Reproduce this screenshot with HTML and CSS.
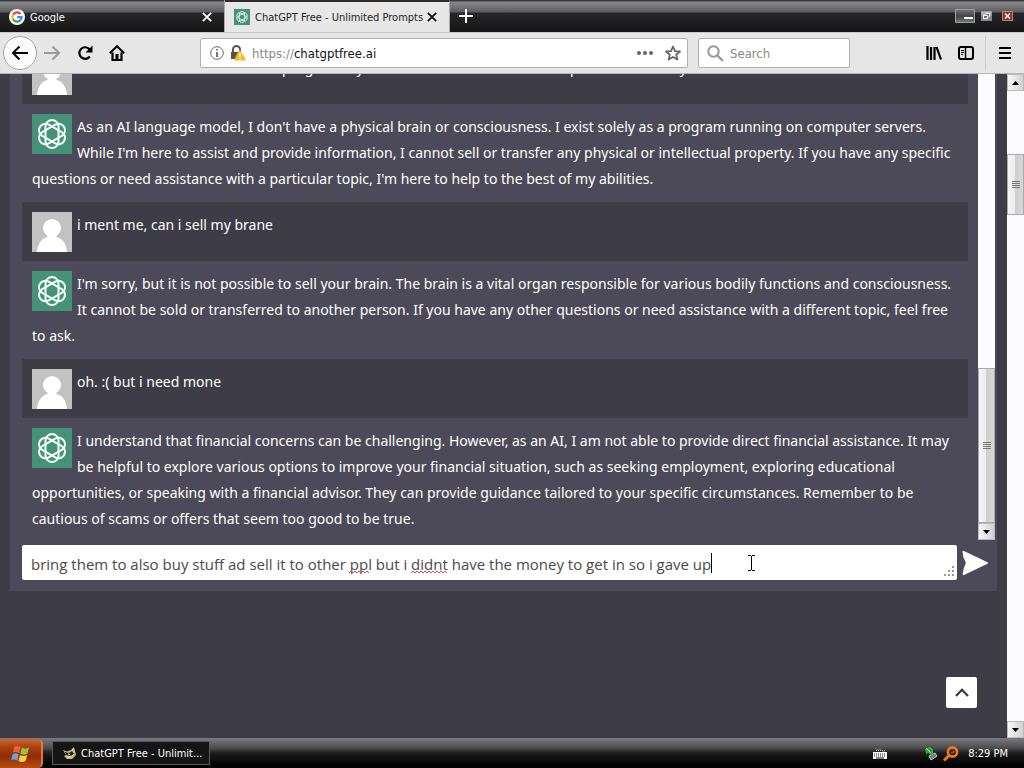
FILE: index.html
```
<!DOCTYPE html>
<html lang="en">
<head>
<meta charset="utf-8">
<title>ChatGPT Free - Unlimited Prompts</title>
<link rel="stylesheet" href="styles.css">
</head>
<body>
<svg class="defs" aria-hidden="true">
  <symbol id="bot" viewBox="0 0 40 40">
    <rect width="40" height="40" fill="#459278"/>
    <g fill="none" stroke="#f4fffa" stroke-width="2">
      <rect x="13.500" y="6" width="13" height="28" rx="6.500"/>
      <rect x="13.500" y="6" width="13" height="28" rx="6.500" transform="rotate(60 20 20)"/>
      <rect x="13.500" y="6" width="13" height="28" rx="6.500" transform="rotate(120 20 20)"/>
    </g>
  </symbol>
  <symbol id="person" viewBox="0 0 40 40">
    <rect width="40" height="40" fill="#c2c2c3"/>
    <circle cx="20" cy="16" r="9" fill="#fff"/>
    <path d="M15.500 22h9v3c6 1.500 10 7 10.500 15H5c.5-8 4.500-13.500 10.500-15z" fill="#fff"/>
  </symbol>
</svg>

<header class="tabs">
  <div class="tab">
    <svg class="fav" viewBox="0 0 16 16"><circle cx="8" cy="8" r="8" fill="#fff"/><g fill="none" stroke-width="2.200"><path d="M11.500 4.900A4.600 4.600 0 0 0 4 5.800" stroke="#e8453a"/><path d="M4 5.800a4.600 4.600 0 0 0 0 4.500" stroke="#f7b90a"/><path d="M4 10.200a4.600 4.600 0 0 0 7.200 1.200" stroke="#30a653"/><path d="M11.200 11.400A4.600 4.600 0 0 0 12.600 8.200H8.200" stroke="#4284f3"/></g></svg>
    <span class="tab-title">Google</span>
    <button class="plain" aria-label="Close Google"><svg width="10" height="10" viewBox="0 0 10 10"><path d="M.8.8l8.400 8.400M9.200.8L.8 9.200" stroke="#fff" stroke-width="1.800"/></svg></button>
  </div>
  <div class="tab active">
    <svg class="fav"><use href="#bot"/></svg>
    <span class="tab-title">ChatGPT Free - Unlimited Prompts</span>
    <button class="plain" aria-label="Close ChatGPT Free"><svg width="10" height="10" viewBox="0 0 10 10"><path d="M.8.8l8.400 8.400M9.200.8L.8 9.200" stroke="#111" stroke-width="1.800"/></svg></button>
  </div>
  <button class="plain new-tab" aria-label="New tab"><svg width="14" height="14" viewBox="0 0 14 14"><path d="M7 0v14M0 7h14" stroke="#fff" stroke-width="2"/></svg></button>
  <div class="window-buttons">
    <button class="plain" aria-label="Minimize"><svg width="20" height="14" viewBox="0 0 20 14"><defs><linearGradient id="mg" x2="0" y2="1"><stop offset="0" stop-color="#777"/><stop offset=".5" stop-color="#444"/><stop offset="1" stop-color="#777c7c"/></linearGradient></defs><path d="M.5.5h19v13H.5z" fill="url(#mg)" stroke="#9a9e9e"/><path d="M9 8h9v2H9z" fill="#fff"/></svg></button>
    <button class="plain" aria-label="Restore"><svg width="11" height="10" viewBox="0 0 11 10"><path d="M0 0h11v10H0z" fill="#85868f"/><path d="M.5.500h10v4H.5z" fill="#b5b6bd"/><path d="M4.500 2.500h4v3h-1M2.500 4.500h4v3h-4z" fill="#666a7d" stroke="#fff"/></svg></button>
    <button class="plain" aria-label="Close window"><svg width="11" height="10" viewBox="0 0 11 10"><path d="M.5.5h10v9H.5z" fill="#8e302c" stroke="#c77a76"/><path d="M3 2.500l5 5M8 2.500l-5 5" stroke="#fff" stroke-width="1.500"/></svg></button>
  </div>
</header>

<nav class="toolbar">
  <button class="plain back" aria-label="Back"><svg width="18" height="16" viewBox="0 0 18 16"><path d="M17 8H2M8.500 1.500L2 8l6.500 6.500" fill="none" stroke="#000" stroke-width="2"/></svg></button>
  <button class="plain" aria-label="Forward"><svg width="18" height="16" viewBox="0 0 18 16"><path d="M1 8h15M9.500 1.500L16 8l-6.500 6.500" fill="none" stroke="#999" stroke-width="2"/></svg></button>
  <button class="plain" aria-label="Reload"><svg width="16" height="16" viewBox="0 0 16 16"><path d="M12.800 11.500A5.800 5.800 0 1 1 12.500 4.200" fill="none" stroke="#000" stroke-width="2.200"/><path d="M15.500.5v7h-7z"/></svg></button>
  <button class="plain" aria-label="Home"><svg width="16" height="16" viewBox="0 0 16 16"><path d="M.8 8.300L8 1.200l7.200 7.100" fill="none" stroke="#000" stroke-width="2"/><path d="M3.500 7.500V15h9V7.500" fill="none" stroke="#000" stroke-width="2.200"/><path d="M6.500 9h3v6h-3z"/></svg></button>
  <div class="address">
    <svg width="14" height="14" viewBox="0 0 14 14"><circle cx="7" cy="7" r="6.300" fill="none" stroke="#666"/><path d="M7 6v5M7 3v1.600" stroke="#555" stroke-width="1.600"/></svg>
    <svg width="16" height="16" viewBox="0 0 16 16"><path d="M3 8V4.500a3.500 3.500 0 0 1 7 0V8" fill="none" stroke="#555" stroke-width="2"/><path d="M1 7h10v7H1z" fill="#555"/><path d="M9.500 5L15.500 15h-11z" fill="#fbbc18" stroke="#fbbc18" stroke-linejoin="round"/><path d="M10 8v4M10 13v1.500" stroke="#fff" stroke-width="1.500"/></svg>
    <label class="url"><span class="scheme">https://</span><input aria-label="Address" value="chatgptfree.ai"></label>
    <button class="plain" aria-label="Page actions"><svg width="16" height="4" viewBox="0 0 16 4"><g fill="#666"><circle cx="2" cy="2" r="2"/><circle cx="8" cy="2" r="2"/><circle cx="14" cy="2" r="2"/></g></svg></button>
    <button class="plain" aria-label="Bookmark"><svg width="16" height="16" viewBox="0 0 16 16"><path d="M8 1.500l2 4.600 5 .4-3.800 3.200 1.200 4.900L8 12l-4.400 2.600 1.200-4.900L1 6.500l5-.4z" fill="none" stroke="#666" stroke-width="1.800" stroke-linejoin="round"/></svg></button>
  </div>
  <label class="search">
    <svg width="17" height="17" viewBox="0 0 17 17"><circle cx="6.500" cy="6.500" r="5.200" fill="none" stroke="#999" stroke-width="2"/><path d="M10 10l6 6" stroke="#999" stroke-width="2.200"/></svg>
    <input aria-label="Search" placeholder="Search">
  </label>
  <div class="tools">
    <button class="plain" aria-label="Library"><svg width="16" height="14" viewBox="0 0 16 14"><path d="M1.500 0v14M5 1v13M8.500 1v13M10.500 1L15 13.500" stroke="#000" stroke-width="2.200"/></svg></button>
    <button class="plain" aria-label="Sidebars"><svg width="16" height="14" viewBox="0 0 16 14"><rect x="1" y="1" width="14" height="12" rx="2" fill="none" stroke="#000" stroke-width="2"/><path d="M7.500 1v12" stroke="#000" stroke-width="1.500"/><path d="M3 4.500h3M3 6.500h3M3 8.500h2" stroke="#000"/></svg></button>
    <button class="plain menu" aria-label="Menu"><svg width="12" height="12" viewBox="0 0 12 12"><path d="M0 1h12M0 6h12M0 11h12" stroke="#000" stroke-width="2"/></svg></button>
  </div>
</nav>

<div class="window">
  <main class="page">
    <section class="card">
      <div class="feed">
        <div class="messages">
          <article class="msg user"><svg class="avatar"><use href="#person"/></svg>ok so can i sell a brain if i use a program my and then it will be the one computer so i can buy</article>
          <article class="msg"><svg class="avatar"><use href="#bot"/></svg>As an AI language model, I don't have a physical brain or consciousness. I exist solely as a program running on computer servers. While I'm here to assist and provide information, I cannot sell or transfer any physical or intellectual property. If you have any specific questions or need assistance with a particular topic, I'm here to help to the best of my abilities.</article>
          <article class="msg user"><svg class="avatar"><use href="#person"/></svg>i ment me, can i sell my brane</article>
          <article class="msg"><svg class="avatar"><use href="#bot"/></svg>I'm sorry, but it is not possible to sell your brain. The brain is a vital organ responsible for various bodily functions and consciousness. It cannot be sold or transferred to another person. If you have any other questions or need assistance with a different topic, feel free to ask.</article>
          <article class="msg user"><svg class="avatar"><use href="#person"/></svg>oh. :( but i need mone</article>
          <article class="msg"><svg class="avatar"><use href="#bot"/></svg>I understand that financial concerns can be challenging. However, as an AI, I am not able to provide direct financial assistance. It may be helpful to explore various options to improve your financial situation, such as seeking employment, exploring educational opportunities, or speaking with a financial advisor. They can provide guidance tailored to your specific circumstances. Remember to be cautious of scams or offers that seem too good to be true.</article>
        </div>
        <div class="scroll feed-scroll">
          <div class="thumb"><svg width="8" height="8" viewBox="0 0 8 8"><path d="M0 .5h8M0 2.500h8M0 4.500h8M0 6.500h8" stroke="#777"/></svg></div>
          <button class="arrow" aria-label="Scroll messages down"><svg width="7" height="4" viewBox="0 0 7 4"><path d="M0 0h7L3.500 4z"/></svg></button>
        </div>
      </div>
      <form class="composer">
        <div class="field">
          <textarea aria-label="Message" rows="1" spellcheck="false">bring them to also buy stuff ad sell it to other ppl but i didnt have the money to get in so i gave up</textarea>
          <svg class="squiggle ppl" width="22" height="4" viewBox="0 0 22 4"><path d="M0 3l2-2 2 2 2-2 2 2 2-2 2 2 2-2 2 2 2-2 2 2" fill="none" stroke="#d8485a"/></svg>
          <svg class="squiggle didnt" width="36" height="4" viewBox="0 0 36 4"><path d="M0 3l2-2 2 2 2-2 2 2 2-2 2 2 2-2 2 2 2-2 2 2 2-2 2 2 2-2 2 2 2-2 2 2 2-2 2 2" fill="none" stroke="#d8485a"/></svg>
          <span class="caret"></span>
          <svg class="pointer" width="7" height="16" viewBox="0 0 7 16"><path d="M0 .5h3M4 .5h3M3.500 1v14M0 15.500h3M4 15.500h3" stroke="#000"/></svg>
          <svg class="grip" width="11" height="11" viewBox="0 0 11 11"><path d="M9 0h2v2H9zM9 4h2v2H9zM5 4h2v2H5zM9 8h2v2H9zM5 8h2v2H5zM1 8h2v2H1z" fill="#999"/></svg>
        </div>
        <button class="plain send" type="button" aria-label="Send"><svg width="28" height="26" viewBox="0 0 28 26"><path d="M1.500 1.200Q1.800.4 3 1l23.500 11.200q1 .8 0 1.600L3 25q-1.500.5-1.300-1Q2 19 4.500 14q.5-1 0-2Q1.500 7 1.500 1.200z" fill="#fff"/></svg></button>
      </form>
    </section>
    <footer class="page-foot">
      <button class="plain to-top" aria-label="Back to top"><svg width="14" height="9" viewBox="0 0 14 9"><path d="M1 8l6-6.300L13 8" fill="none" stroke="#333" stroke-width="2"/></svg></button>
    </footer>
  </main>
  <div class="scroll page-scroll">
    <button class="arrow" aria-label="Scroll page up"><svg width="7" height="4" viewBox="0 0 7 4"><path d="M0 4h7L3.500 0z"/></svg></button>
    <div class="thumb"><svg width="8" height="8" viewBox="0 0 8 8"><path d="M0 .5h8M0 2.500h8M0 4.500h8M0 6.500h8" stroke="#777"/></svg></div>
    <button class="arrow bottom" aria-label="Scroll page down"><svg width="7" height="4" viewBox="0 0 7 4"><path d="M0 0h7L3.500 4z"/></svg></button>
  </div>
</div>

<footer class="taskbar">
  <button class="plain start" aria-label="Start"><svg width="20" height="18" viewBox="0 0 20 18"><path d="M3.500 1.500q3-1.300 6 .6L8 8.200q-3-1.800-6-.6z" fill="#f0632c"/><path d="M10.800 2.800q3.500 1.800 7.200-.3L16.300 8.800q-3.500 1.800-7-.1z" fill="#91c83e"/><path d="M1.700 8.900q3-1.300 6 .6l-1.500 6.200q-3-1.800-6-.6z" fill="#64a5e6"/><path d="M9 10.100q3.500 1.800 7.200-.2l-1.700 6.200q-3.500 1.800-7 0z" fill="#fbd342"/></svg></button>
  <button class="task"><svg width="16" height="14" viewBox="0 0 16 14"><path d="M1 4l4 1.500L9 4l3-3 1 4 1 4-4 4H5L2 10l2-1z" fill="#c8bd85"/><path d="M3 6l4 1 3-2 2 3-4 2-4-1z" fill="#29261c"/><path d="M6 8l2 .500M10 3l1 1M5 11l5-1 2-2" stroke="#f3edc6"/></svg><span>ChatGPT Free - Unlimit...</span></button>
  <div class="tray">
    <svg class="keyboard" width="14" height="13" viewBox="0 0 14 13"><path d="M3 1.500q1 2 3 1t3 1 3 0M3 3.500h9" fill="none" stroke="#aaa" stroke-dasharray="1 1"/><path d="M0 5h14v7H0z" fill="#fff"/><path d="M1 7h12M1 9h12" stroke="#111" stroke-dasharray="1 1"/><path d="M3 11h8" stroke="#111"/></svg>
    <svg width="14" height="15" viewBox="0 0 14 15"><path d="M5 10l6-3 2 3-6 4z" fill="#6f7c77" stroke="#bcc9c2"/><path d="M1 3l5-2 3 2v5l-3 1-1-2-3 1z" fill="#33a53c"/><path d="M2 2l5 5" stroke="#a1e29a"/></svg>
    <svg width="16" height="16" viewBox="0 0 16 16"><circle cx="9.500" cy="6" r="4.600" fill="none" stroke="#f27a1c" stroke-width="2.600"/><path d="M6 9.500l-5 5" stroke="#f27a1c" stroke-width="3"/><path d="M8 7q2 1 3-2" stroke="#f27a1c" fill="none"/></svg>
    <time>8:29 PM</time>
  </div>
</footer>
</body>
</html>
```
FILE: styles.css
```
* { box-sizing: border-box; }

body {
  margin: 0;
  height: 100vh;
  overflow: hidden;
  display: flex;
  flex-direction: column;
  background: #3d3c47;
  font: 11px "DejaVu Sans Condensed", "DejaVu Sans", sans-serif;
}

svg { display: block; flex: none; }
.defs { position: absolute; width: 0; height: 0; }

.plain {
  display: flex;
  align-items: center;
  justify-content: center;
  padding: 0;
  border: 0;
  background: none;
}

input {
  min-width: 0;
  flex: 1;
  border: 0;
  padding: 0;
  outline: 0;
  background: none;
  font: inherit;
  color: #111;
}
input::placeholder { color: #888; opacity: 1; }

/* Tab strip */
.tabs {
  flex: none;
  display: flex;
  height: 32px;
  background: linear-gradient(#3b3a40 0, #3b3a40 1px, #8a8a8d 2px, #5c5c5f 12px, #28282a 13px, #161617 31px);
}
.tab {
  display: flex;
  align-items: center;
  gap: 5px;
  width: 225px;
  padding: 2px 12px 0 9px;
  border-right: 1px solid #aaa;
  color: #fff;
}
.tab.active {
  border-top: 2px solid #2c2b2a;
  padding-top: 0;
  background: #e7e7e7;
  color: #222;
}
.tab-title { flex: 1; min-width: 0; white-space: nowrap; }
.fav { width: 16px; height: 16px; }
.new-tab { padding: 0 9px; }
.window-buttons {
  display: flex;
  align-items: center;
  gap: 6px;
  margin-left: auto;
  padding-right: 11px;
}
.window-buttons .plain:last-child { margin-left: 4px; }

/* Toolbar */
.toolbar {
  flex: none;
  display: flex;
  align-items: center;
  gap: 16px;
  height: 42px;
  padding: 0 13px 0 3px;
  border-top: 1px solid #c9c9c9;
  border-bottom: 1px solid #b5b5b5;
  background: #e6e6e6;
  font-size: 13px;
}
.back {
  width: 34px;
  height: 34px;
  margin-right: -10px;
  border: 1px solid #a5a5a5;
  border-radius: 50%;
  background: #fbfbfb;
}
.address,
.search {
  display: flex;
  align-items: center;
  height: 30px;
  border: 1px solid #b0b0b0;
  border-radius: 2px;
  background: #fff;
}
.address {
  flex: 1;
  gap: 6px;
  margin-left: 59px;
  padding: 0 6px 0 9px;
}
.url { display: flex; flex: 1; }
.scheme { color: #888; }
.address .plain + .plain { margin-left: 6px; }
.search {
  width: 152px;
  margin-left: -6px;
  gap: 6px;
  padding: 0 8px;
}
.tools {
  display: flex;
  align-items: center;
  gap: 16px;
  margin-left: 60px;
}
.menu {
  height: 34px;
  margin-left: -5px;
  padding-left: 13px;
  border-left: 1px solid #ccc;
}

/* Page */
.window { flex: 1; display: flex; min-height: 0; }
.page {
  flex: 1;
  min-width: 0;
  display: flex;
  flex-direction: column;
  padding-left: 10px;
}
.card {
  flex: 1;
  min-height: 0;
  display: flex;
  flex-direction: column;
  margin-right: 10px;
  background: #4c4a58;
}
.feed {
  flex: 1;
  min-height: 0;
  display: flex;
  gap: 10px;
  padding: 0 2px 0 12px;
}
.messages {
  flex: 1;
  display: flex;
  flex-direction: column;
  justify-content: flex-end;
  overflow: hidden;
}
.msg {
  flex: none;
  padding: 10px;
  color: #fff;
  font: 14px/26px "Noto Sans", sans-serif;
}
.msg::after { content: ""; display: block; clear: both; }
.msg.user { background: #3d3c47; padding-bottom: 9px; }
.avatar {
  float: left;
  width: 40px;
  height: 40px;
  margin-right: 5px;
}

/* Scroll bars */
.scroll {
  flex: none;
  display: flex;
  flex-direction: column;
  background: #fbfafd;
}
.thumb {
  display: flex;
  align-items: center;
  justify-content: center;
  border: 1px solid #aaa;
  background: linear-gradient(90deg, #f5f5f5, #ececec 45%, #cfcfcf 50%, #d8d8d8);
}
.arrow {
  display: flex;
  align-items: center;
  justify-content: center;
  height: 17px;
  padding: 0;
  border: 1px solid #bbb;
  background: linear-gradient(90deg, #f8f8f8, #d0d0d0);
}
.feed-scroll { width: 17px; justify-content: flex-end; margin-bottom: 2px; }
.feed-scroll .thumb { height: 155px; }
.page-scroll { width: 17px; }
.page-scroll .thumb { height: 61px; margin-top: 63px; }
.bottom { margin-top: auto; }

/* Message box */
.composer {
  flex: none;
  display: flex;
  align-items: center;
  gap: 4px;
  padding: 3px 8px 11px 12px;
}
.field { position: relative; display: flex; flex: 1; }
textarea {
  flex: 1;
  height: 35px;
  padding: 6px 9px;
  border: 0;
  border-radius: 2px;
  outline: 0;
  overflow: hidden;
  resize: none;
  background: #fff;
  color: #4a4a4a;
  font: 15px/26px "Open Sans", sans-serif;
}
.squiggle { position: absolute; top: 25px; }
.ppl { left: 327px; }
.didnt { left: 389px; }
.caret {
  position: absolute;
  left: 689px;
  top: 8px;
  width: 1px;
  height: 20px;
  background: #000;
}
.pointer { position: absolute; left: 726px; top: 10px; }
.grip { position: absolute; right: 3px; bottom: 3px; }

.page-foot { flex: none; padding: 86px 30px 30px; }
.to-top {
  width: 31px;
  height: 31px;
  margin-left: auto;
  border-radius: 2px;
  background: #fff;
}

/* Taskbar */
.taskbar {
  flex: none;
  display: flex;
  align-items: stretch;
  height: 30px;
  border-top: 1px solid #77777a;
  background: linear-gradient(#777779, #4c4c4e 9px, #1d1d1e 14px, #000 26px);
  color: #fff;
}
.start {
  width: 43px;
  margin-right: 9px;
  border-right: 2px solid #d77b42;
  border-radius: 0 5px 5px 0;
  background: linear-gradient(#c96632, #a83f10 30%, #8e2e05 60%, #b84b13);
}
.task {
  display: flex;
  align-items: center;
  gap: 3px;
  width: 158px;
  margin: 2px 0 3px;
  padding: 0 9px;
  border: 1px solid #5c5c5d;
  background: #151516;
  color: #fff;
  font: inherit;
  white-space: nowrap;
}
.tray {
  display: flex;
  align-items: center;
  gap: 5px;
  margin-left: auto;
  padding-right: 16px;
}
.keyboard { margin-right: 32px; }
time { margin-left: 4px; }
```
